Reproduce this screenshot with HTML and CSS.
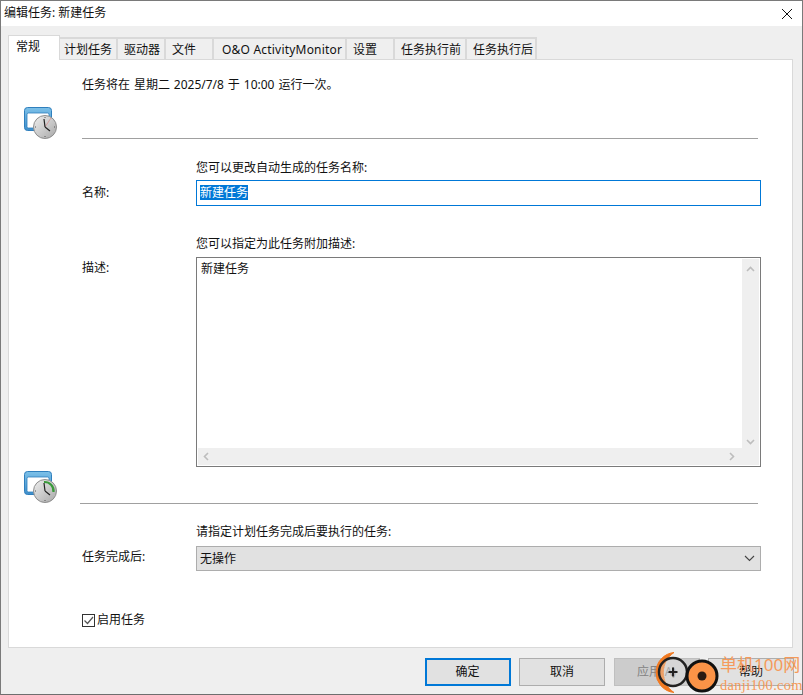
FILE: index.html
```html
<!DOCTYPE html>
<html lang="zh-CN">
<head>
<meta charset="utf-8">
<title>编辑任务: 新建任务</title>
<link rel="stylesheet" href="styles.css">
</head>
<body>
<div class="window">
  <header class="titlebar">
    <span class="title">编辑任务: 新建任务</span>
    <svg class="close" width="10" height="10" viewBox="0 0 10 10"><path d="M0 0L10 10M10 0L0 10" stroke="#111" stroke-width="1" fill="none"/></svg>
  </header>
  <div class="body">
    <nav class="tabs">
      <div class="tab active">常规</div>
      <div class="tab t-plan">计划任务</div>
      <div class="tab t-drive">驱动器</div>
      <div class="tab t-file">文件</div>
      <div class="tab t-oo">O&amp;O ActivityMonitor</div>
      <div class="tab t-set">设置</div>
      <div class="tab t-pre">任务执行前</div>
      <div class="tab t-post">任务执行后</div>
    </nav>
    <main class="panel">
      <p class="summary">任务将在 星期二 2025/7/8 于 10:00 运行一次。</p>
      <div class="sep-row first">
        <svg class="icon" width="34" height="34" viewBox="0 0 34 34">
          <defs>
            <linearGradient id="w1" x1="0" y1="0" x2="0" y2="1"><stop offset="0" stop-color="#7cc0e8"/><stop offset="1" stop-color="#3f8fcb"/></linearGradient>
            <linearGradient id="c1" x1="0" y1="0" x2="1" y2="1"><stop offset="0" stop-color="#efefef"/><stop offset="1" stop-color="#a8a8a8"/></linearGradient>
          </defs>
          <rect x="0.5" y="0.5" width="27" height="23" rx="3" fill="url(#w1)" stroke="#2f7fbd"/>
          <rect x="3" y="6" width="22" height="15" rx="1.5" fill="#fff" stroke="#2f7fbd" stroke-width="0.8"/>
          <circle cx="21" cy="20" r="11.5" fill="url(#c1)" stroke="#8d8d8d"/>
          <path d="M21 20L27 11" stroke="#d98a8a" stroke-width="0.7"/>
          <path d="M21 20L20 12M21 20L26 24" stroke="#222" stroke-width="1.2" fill="none"/>
          <path d="M21 10v1M21 29v1M11 20h1M30 20h1" stroke="#555" stroke-width="1"/>
        </svg>
        <hr class="rule">
      </div>
      <div class="field-row name-row">
        <span class="label name-label">名称:</span>
        <div class="field">
          <div class="hint">您可以更改自动生成的任务名称:</div>
          <div class="input"><span class="selected">新建任务</span></div>
        </div>
      </div>
      <div class="field-row desc-row">
        <span class="label desc-label">描述:</span>
        <div class="field">
          <div class="hint">您可以指定为此任务附加描述:</div>
          <div class="textarea">
            <div class="ta-text">新建任务</div>
            <div class="vbar">
              <svg width="9" height="6" viewBox="0 0 9 6"><path d="M1 5L4.5 1.500L8 5" stroke="#bdbdbd" stroke-width="1.600" fill="none"/></svg>
              <svg width="9" height="6" viewBox="0 0 9 6"><path d="M1 1L4.500 4.500L8 1" stroke="#bdbdbd" stroke-width="1.600" fill="none"/></svg>
            </div>
            <div class="hbar">
              <svg width="6" height="9" viewBox="0 0 6 9"><path d="M5 1L1.500 4.500L5 8" stroke="#bdbdbd" stroke-width="1.600" fill="none"/></svg>
              <svg width="6" height="9" viewBox="0 0 6 9"><path d="M1 1L4.500 4.500L1 8" stroke="#bdbdbd" stroke-width="1.600" fill="none"/></svg>
            </div>
          </div>
        </div>
      </div>
      <div class="sep-row second">
        <svg class="icon" width="34" height="34" viewBox="0 0 34 34">
          <defs>
            <linearGradient id="w2" x1="0" y1="0" x2="0" y2="1"><stop offset="0" stop-color="#7cc0e8"/><stop offset="1" stop-color="#3f8fcb"/></linearGradient>
            <linearGradient id="c2" x1="0" y1="0" x2="1" y2="1"><stop offset="0" stop-color="#efefef"/><stop offset="1" stop-color="#a8a8a8"/></linearGradient>
          </defs>
          <rect x="0.5" y="0.5" width="27" height="23" rx="3" fill="url(#w2)" stroke="#2f7fbd"/>
          <rect x="3" y="6" width="22" height="15" rx="1.500" fill="#fff" stroke="#2f7fbd" stroke-width="0.800"/>
          <circle cx="21" cy="20" r="11.500" fill="url(#c2)" stroke="#8d8d8d"/>
          <path d="M20 11A9 9 0 0 1 29.500 21" stroke="#3a9a3a" stroke-width="2.200" fill="none"/>
          <path d="M21 20L20 12M21 20L26 24" stroke="#222" stroke-width="1.200" fill="none"/>
          <path d="M21 29v1M11 20h1" stroke="#555" stroke-width="1"/>
        </svg>
        <hr class="rule rule-wide">
      </div>
      <div class="field-row after-row">
        <span class="label after-label">任务完成后:</span>
        <div class="field">
          <div class="hint">请指定计划任务完成后要执行的任务:</div>
          <div class="select">
            <span>无操作</span>
            <svg width="11" height="7" viewBox="0 0 11 7"><path d="M1 1L5.500 5.500L10 1" stroke="#444" stroke-width="1.100" fill="none"/></svg>
          </div>
        </div>
      </div>
      <label class="enable">
        <span class="check"><svg width="11" height="11" viewBox="0 0 11 11"><path d="M1.500 5.500L4.500 8.500L10 2" stroke="#555" stroke-width="1.200" fill="none"/></svg></span>
        <span>启用任务</span>
      </label>
    </main>
    <footer class="buttons">
      <div class="btn primary">确定</div>
      <div class="btn">取消</div>
      <div class="btn disabled">应用(A)</div>
      <div class="btn">帮助</div>
    </footer>
  </div>
  <div class="watermark">
    <svg class="wm-logo" width="70" height="46" viewBox="0 0 70 46">
      <path d="M24 4.500A20 20 0 0 0 6 24A20 20 0 0 0 24 44.500A24 24 0 0 1 24 4.500Z" fill="#f07a22" stroke="#f07a22" stroke-width="1"/>
      <circle cx="23" cy="24" r="14" fill="#e9e9e9" fill-opacity="0.350" stroke="#222" stroke-width="2.500"/>
      <path d="M18.500 24h9M23 19.500v9" stroke="#222" stroke-width="2"/>
      <circle cx="52" cy="28" r="15" fill="#fb9347" stroke="#111" stroke-width="3"/>
      <circle cx="52" cy="28" r="4.500" fill="#2a1a12"/>
    </svg>
    <div class="wm-cn">单机100网</div>
    <div class="wm-en">danji100.com</div>
  </div>
</div>
</body>
</html>
```
FILE: styles.css
```css
* { box-sizing: border-box; }
html, body { margin: 0; padding: 0; }
body {
  width: 803px;
  height: 695px;
  overflow: hidden;
  font: 12px/16px "Noto Sans", "Noto Sans CJK SC", sans-serif;
  color: #111;
  background: #fff;
}
.window {
  position: relative;
  width: 803px;
  height: 695px;
  border: 1px solid #7a7a7a;
  border-bottom-color: #6e6e6e;
  display: flex;
  flex-direction: column;
  overflow: hidden;
}
.titlebar {
  height: 25px;
  flex: none;
  background: #fff;
  display: flex;
  align-items: center;
  justify-content: space-between;
  padding: 0 10px 0 3px;
}
.title { font-size: 12px; margin-top: -2px; }
.body {
  flex: 1;
  background: #efefef;
  padding: 9px 9px 0 7px;
  display: flex;
  flex-direction: column;
}
.tabs {
  display: flex;
  height: 25px;
  flex: none;
  align-items: flex-end;
  position: relative;
  z-index: 1;
  margin-bottom: -1px;
}
.tab {
  height: 23px;
  border: 2px solid #d9d9d9;
  border-left-width: 0;
  border-bottom-width: 1px;
  background: #efefef;
  white-space: nowrap;
  padding-top: 3px;
  flex: none;
}
.tab.active {
  width: 52px;
  height: 25px;
  background: #fff;
  border-width: 1px;
  border-bottom: 0;
  border-color: #d9d9d9;
  padding: 3px 0 0 7px;
}
.t-plan { width: 58px; padding-left: 4px; }
.t-drive { width: 48px; padding-left: 6px; }
.t-file { width: 48px; padding-left: 6px; }
.t-oo { width: 133px; padding-left: 8px; letter-spacing: 0.2px; }
.t-set { width: 48px; padding-left: 6px; }
.t-pre { width: 72px; padding-left: 6px; }
.t-post { width: 70px; padding-left: 6px; }
.panel {
  width: 785px;
  height: 589px;
  flex: none;
  background: #fff;
  border: 1px solid #d9d9d9;
  padding-left: 15px;
}
.summary { margin: 17px 0 0 58px; height: 16px; word-spacing: 0.8px; }
.sep-row { display: flex; align-items: flex-end; }
.sep-row.first { height: 53px; }
.first .rule { margin: 0 0 7px 24px; width: 676px; }
.first .icon { margin-bottom: 5px; }
.icon { flex: none; margin-bottom: -1px; }
.rule {
  border: 0;
  height: 1px;
  background: #a0a0a0;
  flex: none;
}
.rule-wide { margin: 0 0 0 22px; width: 678px; }
.field-row { display: grid; grid-template-columns: 114px 565px; margin-left: 58px; }
.name-row { margin-top: 14px; }
.desc-row { margin-top: 30px; }
.label { display: block; }
.name-label { margin-top: 25px; }
.desc-label { margin-top: 24px; }
.after-label { margin-top: 25px; }
.hint { height: 16px; }
.input {
  margin-top: 4px;
  height: 26px;
  border: 1px solid #0078d7;
  padding: 4px 0 0 3px;
}
.selected { background: #0078d7; color: #fff; display: inline-block; height: 15px; line-height: 15px; }
.textarea {
  margin-top: 5px;
  height: 210px;
  border: 1px solid #7a7a7a;
  position: relative;
}
.ta-text { padding: 3px 0 0 4px; }
.vbar {
  position: absolute;
  top: 1px;
  right: 1px;
  bottom: 18px;
  width: 17px;
  background: #efefef;
  display: flex;
  flex-direction: column;
  justify-content: space-between;
  align-items: center;
  padding: 7px 0 3px;
}
.hbar {
  position: absolute;
  left: 1px;
  right: 1px;
  bottom: 1px;
  height: 17px;
  background: #efefef;
  display: flex;
  justify-content: space-between;
  align-items: center;
  padding: 0 24px 0 5px;
}
.sep-row.second { height: 37px; }
.after-row { margin-top: 20px; }
.select {
  margin-top: 6px;
  height: 25px;
  background: #e1e1e1;
  border: 1px solid #adadad;
  display: flex;
  align-items: center;
  justify-content: space-between;
  padding: 0 5px 0 3px;
}
.enable {
  display: flex;
  align-items: center;
  gap: 2px;
  margin: 41px 0 0 58px;
  height: 16px;
}
.check {
  width: 13px;
  height: 13px;
  border: 1px solid #333;
  display: flex;
  align-items: center;
  justify-content: center;
  background: #fff;
}
.buttons {
  display: flex;
  gap: 8.500px;
  justify-content: flex-end;
  padding-top: 10px;
  margin-right: -1px;
}
.btn {
  width: 86px;
  height: 28px;
  background: #e1e1e1;
  border: 1px solid #adadad;
  display: flex;
  align-items: center;
  justify-content: center;
}
.btn.primary { border: 2px solid #0078d7; }
.btn.disabled { background: #cccccc; border-color: #bfbfbf; color: #838383; }
.watermark {
  position: absolute;
  right: 0;
  bottom: 0;
  width: 150px;
  height: 46px;
  pointer-events: none;
}
.wm-logo { position: absolute; left: -2px; top: 0; }
.wm-cn {
  position: absolute;
  left: 68px;
  top: 7px;
  font-size: 17px;
  line-height: 20px;
  color: #f59a5a;
  white-space: nowrap;
}
.wm-en {
  position: absolute;
  left: 68px;
  top: 29px;
  font: 14.500px/16px "Liberation Serif", serif;
  letter-spacing: 0.300px;
  color: #f59a5a;
  white-space: nowrap;
}
```
